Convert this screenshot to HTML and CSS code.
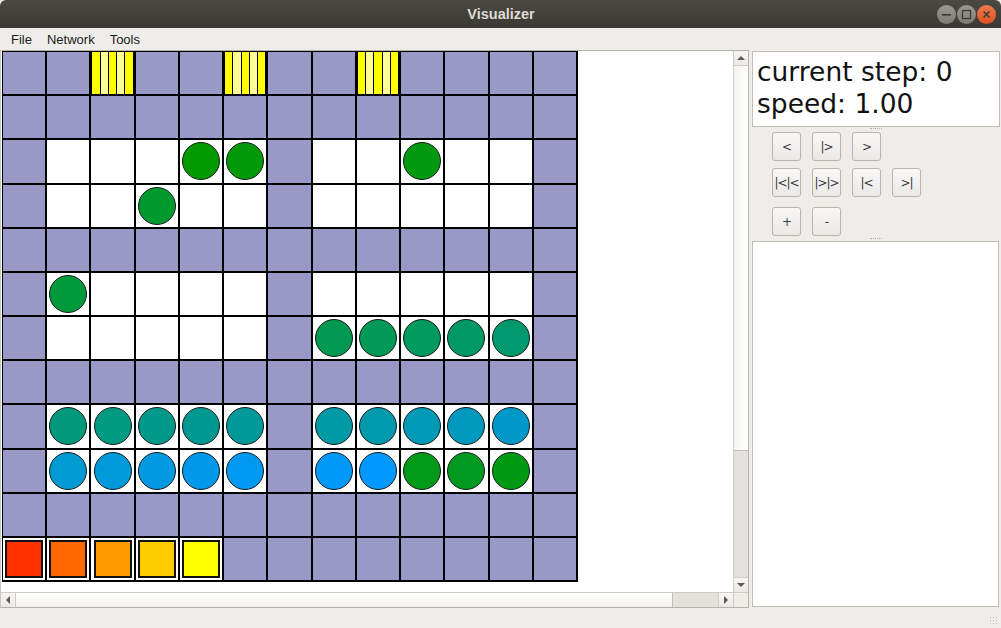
FILE: index.html
```html
<!DOCTYPE html>
<html>
<head>
<meta charset="utf-8">
<title>Visualizer</title>
<link rel="stylesheet" href="styles.css">
</head>
<body>
<div class="window">
  <div class="titlebar">
    <div></div>
    <div class="title">Visualizer</div>
    <div class="wbtns">
      <span class="wbtn min"><svg width="19" height="19" viewBox="0 0 19 19"><rect x="5" y="9" width="9" height="1.6" fill="#3b3a36"/></svg></span>
      <span class="wbtn max"><svg width="19" height="19" viewBox="0 0 19 19"><rect x="5.5" y="5.5" width="8" height="8" fill="none" stroke="#3b3a36" stroke-width="1.3"/></svg></span>
      <span class="wbtn close"><svg width="19" height="19" viewBox="0 0 19 19"><path d="M6.5 6.5 L12.5 12.5 M12.5 6.5 L6.5 12.5" stroke="#3b3a36" stroke-width="1.5"/></svg></span>
    </div>
  </div>
  <div class="menubar">
    <span class="menu">File</span>
    <span class="menu">Network</span>
    <span class="menu">Tools</span>
  </div>
  <div class="main">
    <div class="scrollarea">
      <div class="viewport">
        <div class="board">
          <!-- row 0 -->
          <div class="c p"></div><div class="c p"></div><div class="c y"><i></i><i class="l"></i><i></i><i class="l"></i><i></i></div><div class="c p"></div><div class="c p"></div><div class="c y"><i></i><i class="l"></i><i></i><i class="l"></i><i></i></div><div class="c p"></div><div class="c p"></div><div class="c y"><i></i><i class="l"></i><i></i><i class="l"></i><i></i></div><div class="c p"></div><div class="c p"></div><div class="c p"></div><div class="c p"></div>
          <!-- row 1 -->
          <div class="c p"></div><div class="c p"></div><div class="c p"></div><div class="c p"></div><div class="c p"></div><div class="c p"></div><div class="c p"></div><div class="c p"></div><div class="c p"></div><div class="c p"></div><div class="c p"></div><div class="c p"></div><div class="c p"></div>
          <!-- row 2 -->
          <div class="c p"></div><div class="c w"></div><div class="c w"></div><div class="c w"></div><div class="c w"><span class="dot" style="background:#009900"></span></div><div class="c w"><span class="dot" style="background:#009908"></span></div><div class="c p"></div><div class="c w"></div><div class="c w"></div><div class="c w"><span class="dot" style="background:#009910"></span></div><div class="c w"></div><div class="c w"></div><div class="c p"></div>
          <!-- row 3 -->
          <div class="c p"></div><div class="c w"></div><div class="c w"></div><div class="c w"><span class="dot" style="background:#00992e"></span></div><div class="c w"></div><div class="c w"></div><div class="c p"></div><div class="c w"></div><div class="c w"></div><div class="c w"></div><div class="c w"></div><div class="c w"></div><div class="c p"></div>
          <!-- row 4 -->
          <div class="c p"></div><div class="c p"></div><div class="c p"></div><div class="c p"></div><div class="c p"></div><div class="c p"></div><div class="c p"></div><div class="c p"></div><div class="c p"></div><div class="c p"></div><div class="c p"></div><div class="c p"></div><div class="c p"></div>
          <!-- row 5 -->
          <div class="c p"></div><div class="c w"><span class="dot" style="background:#00993c"></span></div><div class="c w"></div><div class="c w"></div><div class="c w"></div><div class="c w"></div><div class="c p"></div><div class="c w"></div><div class="c w"></div><div class="c w"></div><div class="c w"></div><div class="c w"></div><div class="c p"></div>
          <!-- row 6 -->
          <div class="c p"></div><div class="c w"></div><div class="c w"></div><div class="c w"></div><div class="c w"></div><div class="c w"></div><div class="c p"></div><div class="c w"><span class="dot" style="background:#009950"></span></div><div class="c w"><span class="dot" style="background:#009957"></span></div><div class="c w"><span class="dot" style="background:#00995e"></span></div><div class="c w"><span class="dot" style="background:#009966"></span></div><div class="c w"><span class="dot" style="background:#00996e"></span></div><div class="c p"></div>
          <!-- row 7 -->
          <div class="c p"></div><div class="c p"></div><div class="c p"></div><div class="c p"></div><div class="c p"></div><div class="c p"></div><div class="c p"></div><div class="c p"></div><div class="c p"></div><div class="c p"></div><div class="c p"></div><div class="c p"></div><div class="c p"></div>
          <!-- row 8 -->
          <div class="c p"></div><div class="c w"><span class="dot" style="background:#00997a"></span></div><div class="c w"><span class="dot" style="background:#009982"></span></div><div class="c w"><span class="dot" style="background:#00998a"></span></div><div class="c w"><span class="dot" style="background:#009992"></span></div><div class="c w"><span class="dot" style="background:#00999a"></span></div><div class="c p"></div><div class="c w"><span class="dot" style="background:#0099a6"></span></div><div class="c w"><span class="dot" style="background:#0099ae"></span></div><div class="c w"><span class="dot" style="background:#0099b6"></span></div><div class="c w"><span class="dot" style="background:#0099be"></span></div><div class="c w"><span class="dot" style="background:#0099c8"></span></div><div class="c p"></div>
          <!-- row 9 -->
          <div class="c p"></div><div class="c w"><span class="dot" style="background:#0099d2"></span></div><div class="c w"><span class="dot" style="background:#0099da"></span></div><div class="c w"><span class="dot" style="background:#0099e2"></span></div><div class="c w"><span class="dot" style="background:#0099ea"></span></div><div class="c w"><span class="dot" style="background:#0099f2"></span></div><div class="c p"></div><div class="c w"><span class="dot" style="background:#0099f8"></span></div><div class="c w"><span class="dot" style="background:#0099ff"></span></div><div class="c w"><span class="dot" style="background:#009918"></span></div><div class="c w"><span class="dot" style="background:#009920"></span></div><div class="c w"><span class="dot" style="background:#009912"></span></div><div class="c p"></div>
          <!-- row 10 -->
          <div class="c p"></div><div class="c p"></div><div class="c p"></div><div class="c p"></div><div class="c p"></div><div class="c p"></div><div class="c p"></div><div class="c p"></div><div class="c p"></div><div class="c p"></div><div class="c p"></div><div class="c p"></div><div class="c p"></div>
          <!-- row 11 -->
          <div class="c w"><span class="sq s1"></span></div><div class="c w"><span class="sq s2"></span></div><div class="c w"><span class="sq s3"></span></div><div class="c w"><span class="sq s4"></span></div><div class="c w"><span class="sq s5"></span></div><div class="c p"></div><div class="c p"></div><div class="c p"></div><div class="c p"></div><div class="c p"></div><div class="c p"></div><div class="c p"></div><div class="c p"></div>
        </div>
      </div>
      <div class="vscroll">
        <div class="arrow up"><span class="tri-up"></span></div>
        <div class="vthumb"></div>
        <div class="vtrack"></div>
        <div class="arrow down"><span class="tri-down"></span></div>
      </div>
      <div class="hscroll">
        <div class="arrow left"><span class="tri-left"></span></div>
        <div class="hthumb"></div>
        <div class="htrack"></div>
        <div class="arrow right"><span class="tri-right"></span></div>
      </div>
      <div class="corner"></div>
    </div>
    <div class="side">
      <div class="info">
        <div>current step: 0</div>
        <div>speed: 1.00</div>
      </div>
      <div class="handle"></div>
      <div class="controls">
        <div class="brow">
          <button class="btn">&lt;</button>
          <button class="btn">|&gt;</button>
          <button class="btn">&gt;</button>
        </div>
        <div class="brow">
          <button class="btn">|&lt;|&lt;</button>
          <button class="btn">|&gt;|&gt;</button>
          <button class="btn">|&lt;</button>
          <button class="btn">&gt;|</button>
        </div>
        <div class="brow third">
          <button class="btn">+</button>
          <button class="btn">-</button>
        </div>
      </div>
      <div class="handle"></div>
      <div class="log"></div>
    </div>
  </div>
  <div class="statusbar"><span class="grip"></span></div>
</div>
</body>
</html>
```
FILE: styles.css
```css
html, body {
  margin: 0;
  padding: 0;
}
body {
  width: 1001px;
  height: 628px;
  overflow: hidden;
  background: #efedea;
  font-family: "Liberation Sans", Arial, sans-serif;
}
.window {
  display: flex;
  flex-direction: column;
  width: 1001px;
  height: 628px;
}
.titlebar {
  height: 28px;
  flex: none;
  display: grid;
  grid-template-columns: 1fr auto 1fr;
  align-items: center;
  background: linear-gradient(#4a4944, #3a3935);
  border-radius: 6px 6px 0 0;
}
.title {
  color: #dfdbd2;
  font-weight: bold;
  font-size: 14.5px;
  padding-left: 1px;
}
.wbtns {
  justify-self: end;
  display: flex;
  gap: 1px;
  padding-right: 5px;
}
.wbtn {
  width: 19px;
  height: 19px;
  border-radius: 50%;
  display: block;
  background: linear-gradient(#9a9893, #7d7b76);
}
.wbtn svg { display: block; }
.wbtn.close {
  background: linear-gradient(#f07a4c, #e0501f);
}
.menubar {
  height: 22px;
  flex: none;
  display: flex;
  align-items: center;
  padding-left: 4px;
  font-size: 13px;
  color: #1a1a1a;
  background: #efedea;
}
.menu {
  padding: 0 7px 0 7px;
  margin-right: 1px;
}
.main {
  height: 558px;
  flex: none;
  display: flex;
}
.scrollarea {
  width: 749px;
  box-sizing: border-box;
  border: 1px solid #b6b2ab;
  border-left-color: #c9c5bf;
  display: grid;
  grid-template-columns: 1fr 15px;
  grid-template-rows: 1fr 15px;
}
.viewport {
  background: #fff;
  overflow: hidden;
}
.board {
  margin-left: 1px;
  width: 576px;
  height: 531px;
  box-sizing: border-box;
  padding: 1px 2px 2px 1px;
  background: #000;
  display: grid;
  grid-template-columns: repeat(13, 1fr);
  grid-template-rows: repeat(12, 1fr);
  gap: 2px;
}
.c {
  display: flex;
  align-items: center;
  justify-content: center;
  min-width: 0;
  min-height: 0;
}
.p { background: #9999c8; }
.w { background: #fff; }
.y {
  background: #000;
  display: flex;
  align-items: stretch;
  gap: 1px;
  padding: 0 1px;
}
.y i {
  flex: 1;
  background: #ffff00;
}
.y i.l { background: #ffff99; }
.dot {
  width: 38px;
  height: 38px;
  box-sizing: border-box;
  border-radius: 50%;
  border: 1px solid #1a1a1a;
}
.sq {
  width: 38px;
  height: 38px;
  box-sizing: border-box;
  border: 2px solid #111;
}
.s1 { background: #ff3300; }
.s2 { background: #ff6600; }
.s3 { background: #ff9900; }
.s4 { background: #ffcc00; }
.s5 { background: #ffff00; }

.vscroll {
  display: flex;
  flex-direction: column;
  background: #e3e1dd;
  border-left: 1px solid #cfcbc5;
}
.hscroll {
  display: flex;
  background: #e3e1dd;
  border-top: 1px solid #cfcbc5;
}
.corner {
  background: #efedea;
  border-left: 1px solid #cfcbc5;
  border-top: 1px solid #cfcbc5;
}
.arrow {
  flex: none;
  width: 14px;
  height: 14px;
  display: flex;
  align-items: center;
  justify-content: center;
  background: linear-gradient(#f7f6f5, #ebe9e6);
}
.vscroll .arrow { width: auto; }
.hscroll .arrow { height: auto; }
.arrow.up { border-bottom: 1px solid #cfcbc5; }
.arrow.down { border-top: 1px solid #cfcbc5; }
.arrow.left { border-right: 1px solid #cfcbc5; }
.arrow.right { border-left: 1px solid #cfcbc5; }
.tri-up, .tri-down, .tri-left, .tri-right {
  width: 0;
  height: 0;
  display: block;
}
.tri-up {
  border-left: 4px solid transparent;
  border-right: 4px solid transparent;
  border-bottom: 4px solid #5a5a5a;
}
.tri-down {
  border-left: 4px solid transparent;
  border-right: 4px solid transparent;
  border-top: 4px solid #5a5a5a;
}
.tri-left {
  border-top: 4px solid transparent;
  border-bottom: 4px solid transparent;
  border-right: 4px solid #5a5a5a;
}
.tri-right {
  border-top: 4px solid transparent;
  border-bottom: 4px solid transparent;
  border-left: 4px solid #5a5a5a;
}
.vthumb {
  height: 385px;
  flex: none;
  box-sizing: border-box;
  border-bottom: 1px solid #c3bfb8;
  background: linear-gradient(to right, #f4f3f1, #ffffff);
}
.vtrack { flex: 1; }
.hthumb {
  width: 657px;
  flex: none;
  box-sizing: border-box;
  border-right: 1px solid #c3bfb8;
  background: linear-gradient(#ffffff, #f2f1ef);
}
.htrack { flex: 1; }

.side {
  width: 248px;
  margin-left: 3px;
  display: flex;
  flex-direction: column;
}
.info {
  margin-top: 1px;
  height: 76px;
  flex: none;
  box-sizing: border-box;
  border: 1px solid #c1bdb6;
  background: #fff;
  padding: 4px 0 0 4px;
  font-family: "DejaVu Sans", sans-serif;
  font-size: 26.5px;
  line-height: 32px;
  color: #111;
}
.handle {
  height: 4px;
  flex: none;
  display: flex;
  justify-content: center;
  align-items: center;
}
.handle::after {
  content: "";
  width: 12px;
  height: 1px;
  border-top: 1px dotted #b9b5ae;
}
.controls {
  flex: none;
  height: 106px;
  box-sizing: border-box;
  padding: 1px 0 0 20px;
  display: flex;
  flex-direction: column;
  gap: 7px;
}
.brow {
  display: flex;
  gap: 11px;
}
.brow.third { margin-top: 3px; }
.btn {
  width: 29px;
  height: 29px;
  margin: 0;
  padding: 0;
  box-sizing: border-box;
  border: 1px solid #b9b5ae;
  border-radius: 3px;
  background: linear-gradient(#f8f7f6, #ebe9e6);
  font-family: "DejaVu Sans", sans-serif;
  font-size: 12px;
  color: #3a3a3a;
  letter-spacing: -1px;
  white-space: nowrap;
  overflow: visible;
  text-align: center;
}
.log {
  flex: 1;
  margin-bottom: 1px;
  margin-right: 1px;
  border: 1px solid #c1bdb6;
  background: #fff;
}
.statusbar {
  flex: 1;
  position: relative;
  background: #efedea;
}
.grip {
  position: absolute;
  right: 2px;
  bottom: 2px;
  width: 10px;
  height: 10px;
  background: radial-gradient(circle, #c9c5be 0.8px, transparent 1px) 0 0 / 3px 3px;
}
```
